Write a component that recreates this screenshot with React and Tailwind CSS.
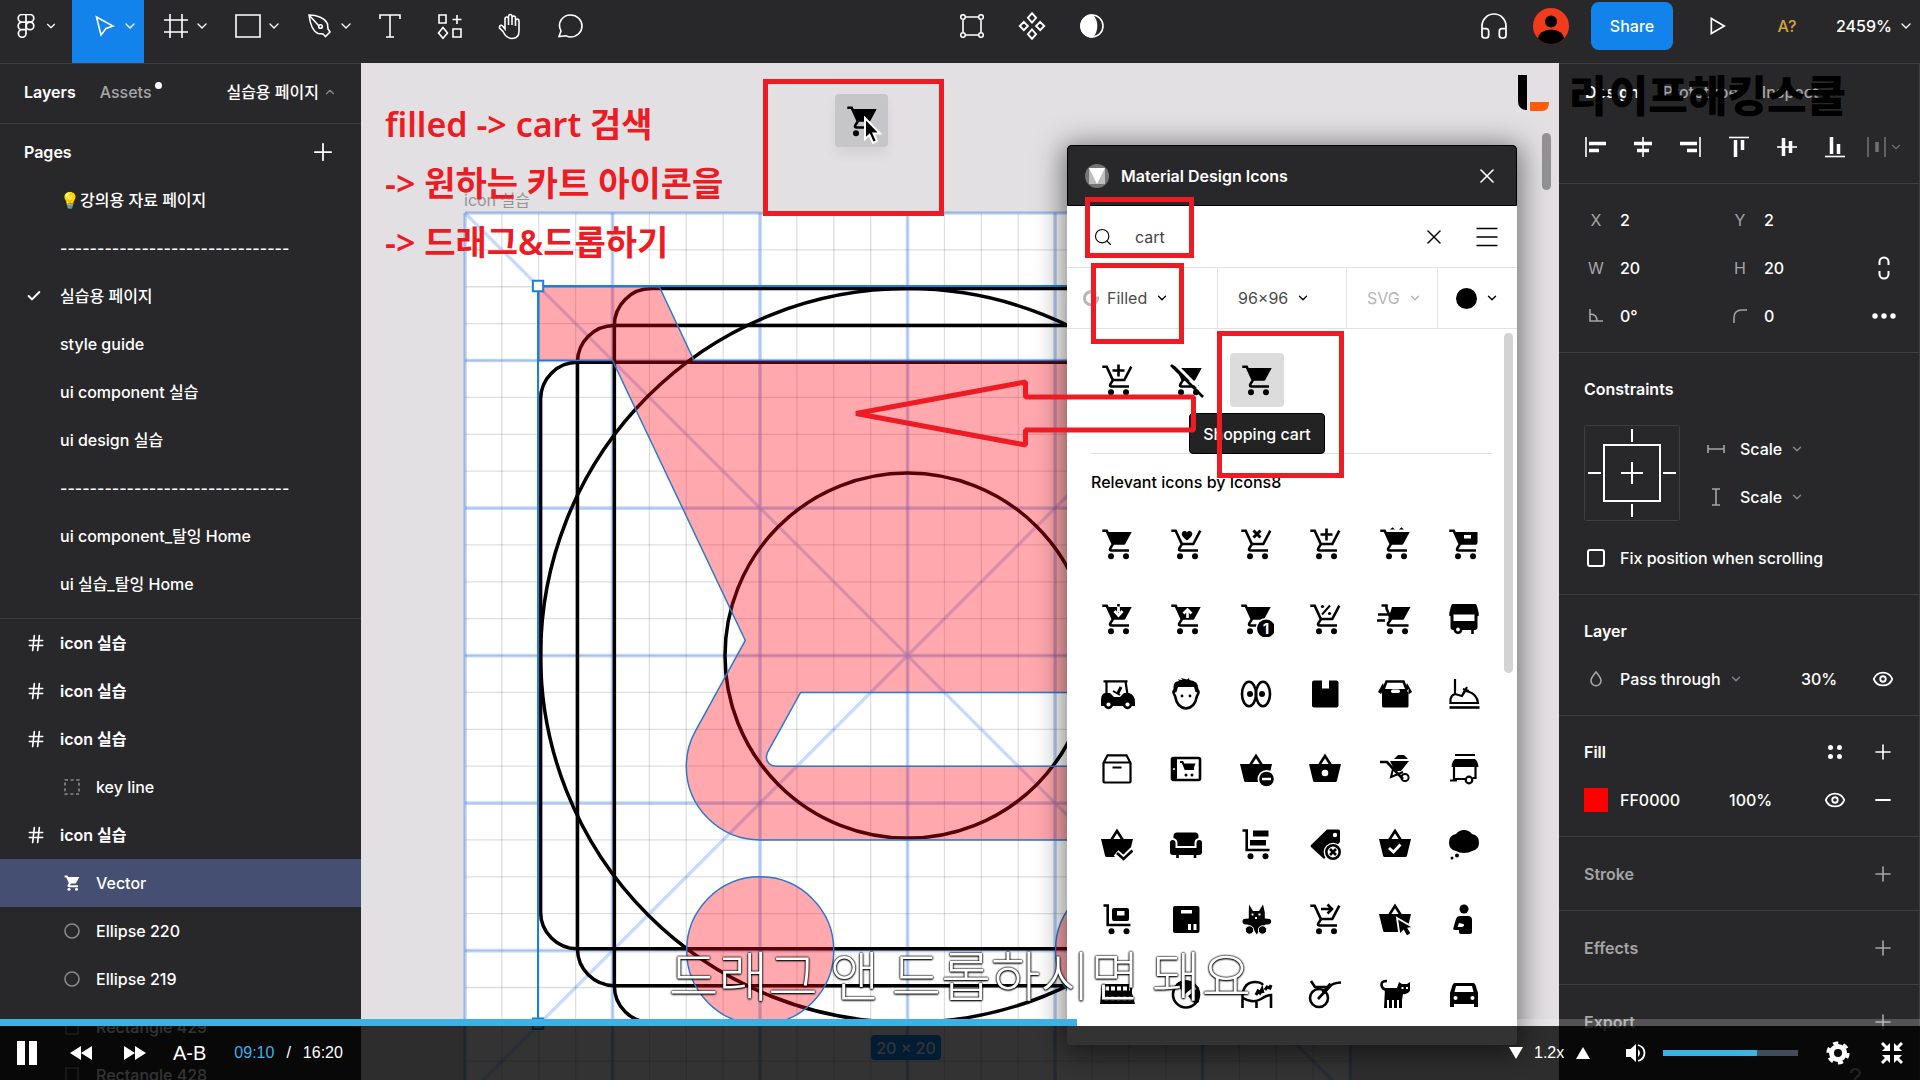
import React from 'react';
import { ChevronDown, ChevronUp, Plus, Minus, X, Check, Search, Hash, Eye, Headphones } from 'lucide-react';

const pages = [
  { name: '💡강의용 자료 페이지' },
  { name: '-------------------------------' },
  { name: '실습용 페이지', current: true },
  { name: 'style guide' },
  { name: 'ui component 실습' },
  { name: 'ui design 실습' },
  { name: '-------------------------------' },
  { name: 'ui component_탈잉 Home' },
  { name: 'ui 실습_탈잉 Home' },
];

const layers = [
  { name: 'icon 실습', type: 'frame' },
  { name: 'icon 실습', type: 'frame' },
  { name: 'icon 실습', type: 'frame' },
  { name: 'key line', type: 'group' },
  { name: 'icon 실습', type: 'frame' },
  { name: 'Vector', type: 'vector', selected: true },
  { name: 'Ellipse 220', type: 'ellipse' },
  { name: 'Ellipse 219', type: 'ellipse' },
  { name: 'Rectangle 429', type: 'rect' },
  { name: 'Rectangle 428', type: 'rect' },
];

/* ---------- shared bits ---------- */

function Svg({ size = 24, box = 24, sw = 1.6, className = '', children }) {
  return (
    <svg
      width={size}
      height={size}
      viewBox={`0 0 ${box} ${box}`}
      fill="none"
      stroke="currentColor"
      strokeWidth={sw}
      className={`shrink-0 ${className}`}
      aria-hidden="true"
    >
      {children}
    </svg>
  );
}

function Select({ label, value, chevron = 'text-[#8a8a8a]', className = '' }) {
  return (
    <label className={`flex items-center gap-2 ${className}`}>
      <select aria-label={label} defaultValue={value} className="appearance-none field-sizing-content bg-transparent outline-none">
        <option>{value}</option>
      </select>
      <ChevronDown className={`w-3.5 h-3.5 shrink-0 ${chevron}`} strokeWidth={2.4} />
    </label>
  );
}

/* ---------- plugin icons, drawn on a 36px box ---------- */

const fillOnly = { fill: 'currentColor', stroke: 'none' };
const white = { fill: '#fff', stroke: 'none' };

const Wheels = () => (
  <g {...fillOnly}>
    <circle cx="12" cy="30.3" r="3" />
    <circle cx="27" cy="30.3" r="3" />
  </g>
);
const CartFrame = () => (
  <>
    <path d="M3.3 4.8h4.4l6.2 13.4-2.6 4.2c-.7 1.3 0 2.1 1.3 2.1h17.4" />
    <Wheels />
  </>
);
const Basket = () => <path {...fillOnly} d="M7.5 6h25.2l-6.3 11.7c-.4.8-1 1.1-1.8 1.1H13.4z" />;
const OpenBasket = () => <path d="M13.6 18h11.7l7-13.4" />;
const HandBasket = () => (
  <>
    <path d="M12.500 13.500 18 5l5.500 8.500" />
    <path {...fillOnly} d="M2 13h32l-4 16.5q-.3 1.5-1.6 1.5H7.6q-1.300 0-1.600-1.500z" />
  </>
);
const Trolley = () => (
  <>
    <path d="M4.500 4.500h4.200v19.500h22.800" />
    <g {...fillOnly}>
      <circle cx="12.5" cy="30.3" r="3" />
      <circle cx="27.5" cy="30.3" r="3" />
    </g>
  </>
);

const addCart = (
  <>
    <CartFrame />
    <OpenBasket />
    <path d="M19.5 2.500v12M13.500 8.500h12" />
  </>
);
const plainCart = (
  <>
    <CartFrame />
    <Basket />
  </>
);
const cartOff = (
  <>
    <CartFrame />
    <Basket />
    <path d="M4 0 38 34" stroke="#fff" strokeWidth="3" />
    <path d="M2 3l32 32" />
  </>
);

const pluginIcons = [
  plainCart,
  <>
    <CartFrame />
    <OpenBasket />
    <path {...fillOnly} d="M19 14.5c-2.500-2.300-5.300-4.200-5.300-6.600 0-2.900 3.800-3.900 5.300-1.400 1.500-2.500 5.300-1.500 5.300 1.400 0 2.400-2.800 4.300-5.300 6.600z" />
  </>,
  <>
    <CartFrame />
    <OpenBasket />
    <path d="m15.500 4.500 7 7m0-7-7 7" strokeWidth="3" />
  </>,
  addCart,
  <>
    <CartFrame />
    <Basket />
    <path {...fillOnly} d="m13 3.500 2.500-2.200L18 3.500zM22 3.500l2.500-2.200L27 3.500z" />
  </>,
  <>
    <CartFrame />
    <path {...fillOnly} d="M7.500 6h24v10.500q0 2.300-2 2.300H13.400z" />
    <path {...white} d="M18 9h7v3.500h-7z" />
  </>,
  <>
    <CartFrame />
    <Basket />
    <path d="M19.500 3.500v8M15.500 10l4 4.500 4-4.500" stroke="#fff" strokeWidth="2.8" />
    <path d="M19.500 3v2.500" />
  </>,
  <>
    <CartFrame />
    <Basket />
    <path d="M19.500 17V9.500M15.500 12.500l4-4 4 4" stroke="#fff" />
  </>,
  <>
    <CartFrame />
    <Basket />
    <circle cx="28" cy="27.5" r="10.5" {...white} />
    <circle cx="28" cy="27.5" r="9" {...fillOnly} />
    <text x="28" y="33" textAnchor="middle" fill="#fff" stroke="none" fontSize="15" fontWeight="700">1</text>
  </>,
  <>
    <CartFrame />
    <OpenBasket />
    <path d="m15 13.500 8-9" strokeWidth="2" />
    <circle cx="15.5" cy="5.5" r="1.6" {...fillOnly} />
    <circle cx="22.5" cy="12.5" r="1.6" {...fillOnly} />
  </>,
  <>
    <path d="M4.500 4.500h5v3l4.500 10.500-3 4.500c-.6 1.200.2 2 1.500 2h19M1 13.500h10M0 19.500h8" />
    <path {...fillOnly} d="M15 6h18.500l-7 12.800H11z" />
    <g {...fillOnly}>
      <circle cx="13" cy="30.3" r="3" />
      <circle cx="28" cy="30.3" r="3" />
    </g>
  </>,
  <>
    <path {...fillOnly} d="M7 3h22q1.500 0 2 2l1.700 7v3H3.300v-3L5 5q.5-2 2-2zM4.500 15h27v11q0 3-3 3h-21q-3 0-3-3z" />
    <path {...white} d="M7.500 13.500h21V20h-21z" />
    <circle cx="12" cy="28.5" r="3.2" fill="#fff" />
    <path d="M26.500 28v5" />
  </>,
  <>
    <path d="M4.500 5.300h24M7.500 5v14M26.500 5l2 14" strokeWidth="2.2" />
    <path d="m18.500 18 3.500-7" strokeWidth="3" />
    <path d="m14 15 7 4" strokeWidth="2" />
    <path {...fillOnly} d="M6 17h5l4 4h6l4-4h5q6 2 6 9v4H2v-6q0-6 4-7z" />
    <circle cx="9.5" cy="28.5" r="3.4" fill="#fff" />
    <circle cx="28.5" cy="28.5" r="3.4" fill="#fff" />
  </>,
  <>
    <path d="M7 14q-2.500 1-1 4l1.200 2.500Q9 31.500 18 32.500 27 31.500 28.800 20.500L30 18q1.500-3-1-4" />
    <path {...fillOnly} d="M5.500 17V11q0-6 6-6l-2-1.500 5 .5L13 2l6 1.500L21 2l.5 2Q30.500 5 30.500 13v4l-3-1-1.500-5H10l-1.500 5z" />
    <circle cx="14" cy="20" r="1.4" {...fillOnly} />
    <circle cx="22" cy="20" r="1.4" {...fillOnly} />
  </>,
  <>
    <ellipse cx="11" cy="18" rx="7" ry="12.3" />
    <ellipse cx="25" cy="18" rx="7" ry="12.3" />
    <circle cx="12" cy="18" r="3" {...fillOnly} />
    <circle cx="24" cy="18" r="3" {...fillOnly} />
  </>,
  <>
    <rect x="5" y="4.5" width="26.5" height="27" rx="2" {...fillOnly} />
    <path {...white} d="M15 4h7v8.500h-7z" />
  </>,
  <>
    <path d="M6 14.500 9.500 5.500h17L30 14.500" />
    <path {...fillOnly} d="M5 13h26.500v17q0 1.500-1.500 1.500H6.500Q5 31.500 5 30zM1 16 6 7l1.500 5-3.500 6zM35 16 30 7l-1.500 5 3.500 6z" />
    <rect x="14" y="13.5" width="9" height="3.5" rx="1.7" {...white} />
  </>,
  <>
    <path d="M9 3v15l7 2 3-5 3 .5Q31 18 32 27H4.500V23q1-4 4.500-5" strokeWidth="2.2" />
    <path d="m17 13 6 2M21 11l-4 7" strokeWidth="2.2" />
    <path d="M3.500 31.500h30" />
  </>,
  <path d="M4.500 12 8.500 4.300h19L31.500 12v18.500q0 1-1 1h-25q-1 0-1-1zM4.500 11.500h27M13.500 16.500h9" strokeWidth="2.2" />,
  <>
    <rect x="4" y="7" width="28" height="22" rx="1.5" />
    <path d="M4 8h5v20H4z" {...fillOnly} />
    <path d="M12 11h2.500l3 7h8.500" strokeWidth="2" />
    <path d="M15 12.500h12.500L25 19h-8z" {...fillOnly} />
    <circle cx="18" cy="24" r="1.5" {...fillOnly} />
    <circle cx="24" cy="24" r="1.5" {...fillOnly} />
    <circle cx="6" cy="18" r="1" {...white} />
  </>,
  <>
    <HandBasket />
    <circle cx="28.5" cy="28" r="9" {...white} />
    <circle cx="28.5" cy="28" r="7.3" {...fillOnly} />
    <path d="M24 28h9" stroke="#fff" strokeWidth="2.5" />
  </>,
  <>
    <HandBasket />
    <circle cx="18" cy="22" r="3.3" {...white} />
  </>,
  <>
    <path d="M3 11h7l11 12 5 5" />
    <path {...fillOnly} d="m17 8 4-4h6l4 4zM13 10h19l-8 10h-6z" />
    <path d="m16 18-2 8 12-5" strokeWidth="2" />
    <circle cx="28" cy="26.5" r="3.6" strokeWidth="2" />
  </>,
  <>
    <path d="M9 4h20M8 15v13h12M4 29.500h7M29.500 15v12h-3" strokeWidth="2.2" />
    <path {...fillOnly} d="M9 8h20q3 2 3.500 8H5.500Q6 10 9 8z" />
    <circle cx="23" cy="29" r="3.3" strokeWidth="2.2" />
  </>,
  <>
    <HandBasket />
    <path d="m17 27 7.500 6.500L34 24" stroke="#fff" strokeWidth="7" />
    <path d="m18 27 6.500 6 9-8.500" />
  </>,
  <>
    <path {...fillOnly} d="M9 6.500h18q3.500 0 3.500 3.500v2q-4 1-4 5v3h-17v-3q0-4-4-5v-2q0-3.500 3.500-3.500zM2 17q0-3 2.700-3T7.500 17v5h21v-5q0-3 2.800-3T34 17v9q0 3-3 3H5q-3 0-3-3z" />
    <path d="M9.500 28v4M27 28v4" />
  </>,
  <>
    <Trolley />
    <path {...fillOnly} d="M15 4.500h15.500v6H15zM12 14h16v5.500H12z" />
  </>,
  <>
    <path {...fillOnly} d="M20 3.500h11.500q1.500 0 1.500 1.500v11L17 33 4 21q-1-1 0-2z" />
    <circle cx="28" cy="9" r="2.2" {...white} />
    <circle cx="26" cy="26" r="9.3" {...white} />
    <circle cx="26" cy="26" r="6.7" />
    <path d="m23 23 6 6m0-6-6 6" />
  </>,
  <>
    <HandBasket />
    <path d="m12 22 4.500 4 7-7.500" stroke="#fff" strokeWidth="2.8" />
  </>,
  <>
    <path {...fillOnly} d="M10 25q-7-1-7-8.500T10 8q3-4 8-4t8 4q7 1 7 8.500T26 25q-3 2-8 2t-8-2z" />
    <circle cx="11" cy="29.5" r="2" {...fillOnly} />
    <circle cx="6" cy="32" r="1.5" {...fillOnly} />
  </>,
  <>
    <Trolley />
    <rect x="13" y="7" width="17" height="13" rx="2" {...fillOnly} />
    <path {...white} d="M18 10h7.500v4.500H18z" />
  </>,
  <>
    <rect x="5" y="5" width="26.5" height="27" rx="2" {...fillOnly} />
    <path {...white} d="M13 9h11v3.500H13zM20 23h3v6h-3zM25.500 23h3v6h-3z" />
  </>,
  <>
    <path {...fillOnly} d="m11 3.500 4 6.500h6l4-6.500 1.800 8v6l5 .5q2 1 1 4-1 2-5 1.500l-4 2-5 8-5-8-4-2q-4 .5-5-1.500-1-3 1-4l5-.5v-6z" />
    <circle cx="11.5" cy="29" r="4.2" fill="currentColor" stroke="#fff" strokeWidth="1" />
    <circle cx="24.5" cy="29" r="4.2" fill="currentColor" stroke="#fff" strokeWidth="1" />
    <path {...white} d="M13.500 12.500h2v2h-2zM20.500 12.500h2v2h-2zM17 16h2v2h-2z" />
  </>,
  <>
    <CartFrame />
    <OpenBasket />
    <path d="M14 8h10M20.500 3.500 25 8l-4.500 4.500" />
  </>,
  <>
    <HandBasket />
    <path d="M20 17l2.500 17 4-4 3 5.500 5-3-3-5 5-1z" fill="currentColor" stroke="#fff" strokeWidth="1.8" />
  </>,
  <>
    <circle cx="18" cy="8" r="4.5" {...fillOnly} />
    <path {...fillOnly} d="M14 15h8q4 0 4 4v12q0 2-2 2H15q-2 0-2-2v-2H9q-2.500 0-1.500-2.500L10 18q1-3 4-3z" />
    <path {...white} d="m13 22-1.500 4H16q3-1 1.500-3z" />
  </>,
  <>
    <path {...fillOnly} d="M3 8h30v9l3 11H1z" />
    <path d="M6 12.500h25M5.500 22.500h27" stroke="#fff" strokeWidth="4" strokeDasharray="4 2" />
  </>,
  <>
    <circle cx="18" cy="18.5" r="13" />
    <path {...fillOnly} d="M17 18 8 8Q18 0 28 9zM20 20l11-9v15l-4 2z" />
  </>,
  <>
    <path d="M4.500 32V19Q6 6 17 6q6 0 8 3M5 22q10 6 18 1 6-4 10-4v13M18.500 26v6" />
    <path d="m18 19 2-4 2 2 2-4 1 4M27 14l2-3 3 1 1-3" strokeWidth="3" />
  </>,
  <>
    <circle cx="12" cy="22" r="9" />
    <path d="m11 23 12-13q3-3 11-3.500M4 5l4 6h12" />
    <path d="m24 8-8 9" strokeWidth="4" />
  </>,
  <>
    <path d="M10 5Q4 5 4.500 9q.5 4 5 5" />
    <path {...fillOnly} d="M8 12h12l2-6 3 2h5l3-2v9q-3 4-7 3l-1 6v8h-3v-8h-2v8h-3v-8h-2v8h-3v-8h-2v8H7z" />
    <path {...white} d="M24.500 11h2v2h-2zM29 11h2v2h-2z" />
  </>,
  <>
    <path {...fillOnly} d="M9 7h18q2 0 2.500 2L32 17v14h-4v-3H8v3H4V17L6.500 9Q7 7 9 7z" />
    <path {...white} d="M10 10h16l1.500 6h-19z" />
    <circle cx="9.5" cy="22" r="2" {...white} />
    <circle cx="26.5" cy="22" r="2" {...white} />
  </>,
];

/* ---------- top toolbar ---------- */

const tools = [
  {
    label: 'Move',
    active: true,
    menu: true,
    icon: <path d="m4.500 3 16.500 9-7 2.500-5 6.500z" />,
  },
  { label: 'Frame', menu: true, icon: <path d="M6 0v24M18 0v24M0 6h24M0 18h24" /> },
  { label: 'Rectangle', menu: true, icon: <path d="M0 1h24v22H0z" /> },
  {
    label: 'Pen',
    menu: true,
    icon: (
      <>
        <path d="M1 1c8 0 16 3 18.500 9l.5 5 2 3-4.500 4.500L15 20l-5-.5C4 17 2 9 1 1zM1 1l10 11" />
        <circle cx="12.5" cy="12.5" r="1.8" />
      </>
    ),
  },
  { label: 'Text', icon: <path d="M2 5V1h20v4M12 1v22M8 23h8" /> },
  {
    label: 'Resources',
    icon: <path d="M1 1h7v8H1zM15 15h8v8h-8zM19 1v9M14.500 5.500h9M5 13.500 9.500 19 5 24.200.5 19z" />,
  },
  {
    label: 'Hand',
    icon: (
      <path d="M7 15V5c0-2.600 3.500-2.600 3.500 0v6V2.500c0-2.600 3.500-2.600 3.500 0V11 4c0-2.600 3.500-2.600 3.500 0v8-5c0-2.600 3.500-2.400 3.500 0v10c0 5-3 7.500-7 7.500-5 0-7-3-9-7L1.500 14C1 11 4 10.500 5 12.500z" />
    ),
  },
  { label: 'Comment', icon: <path d="M1 22.500 3 17C-1.500 8.500 5 1 12.500 1 19 1 24 6 24 12s-5 11-11.500 11c-2 0-3-.5-4.500-1.200z" /> },
];

function Toolbar() {
  return (
    <header className="h-[63px] shrink-0 flex justify-between bg-[#28282a] text-white">
      <nav className="flex">
        <button aria-label="Main menu" className="w-[72px] h-full pl-[14px] pb-[11px] flex items-center gap-1.5">
          <Svg sw="1.7">
            <path d="M12 .5H8a3.800 3.800 0 0 0 0 7.600h4zM12 .5h4a3.800 3.800 0 0 1 0 7.600h-4zM12 8.100H8a3.800 3.800 0 0 0 0 7.600h4zM12 15.700H8a3.800 3.800 0 1 0 4 3.800z" />
            <circle cx="16" cy="11.9" r="3.8" />
          </Svg>
          <ChevronDown className="w-3.5 h-3.5" />
        </button>
        {tools.map((tool) => (
          <button
            key={tool.label}
            aria-label={tool.label}
            className={`h-full pb-[11px] flex items-center gap-1.5 ${tool.menu ? 'w-[72px] pl-5' : 'w-[60px] justify-center'} ${tool.active ? 'bg-[#1283eb]' : ''}`}
          >
            <Svg className="overflow-visible">{tool.icon}</Svg>
            {tool.menu && <ChevronDown className="w-4 h-4" />}
          </button>
        ))}
      </nav>

      <nav className="flex pb-[11px]">
        <button aria-label="Edit object" className="w-[60px] flex items-center justify-center">
          <Svg>
            <path d="M6 3h12M6 21h12M3 6v12M21 6v12" />
            <circle cx="3" cy="3" r="2.3" />
            <circle cx="21" cy="3" r="2.3" />
            <circle cx="3" cy="21" r="2.3" />
            <circle cx="21" cy="21" r="2.3" />
          </Svg>
        </button>
        <button aria-label="Create component" className="w-[60px] flex items-center justify-center">
          <Svg size={28}>
            <path d="m12 1 3.500 4L12 9 8.500 5zM12 15l3.500 4-3.500 4-3.500-4zM5 8.500 8.500 12 5 15.500 1.500 12zM19 8.500l3.500 3.500-3.500 3.500-3.500-3.500z" />
          </Svg>
        </button>
        <button aria-label="Use as mask" className="w-[60px] flex items-center justify-center">
          <Svg>
            <circle cx="12" cy="12" r="11" />
            <path d="M12 1a11 11 0 0 0 0 22q4.500-4 4.500-11T12 1z" fill="currentColor" />
          </Svg>
        </button>
      </nav>

      <div className="flex items-center pb-[11px]">
        <button aria-label="Start conversation" className="w-[60px] flex justify-center">
          <Headphones className="w-8 h-8" strokeWidth={1.3} />
        </button>
        <button aria-label="Account" className="w-[54px] flex justify-center">
          <svg width="36" height="36" viewBox="0 0 36 36">
            <clipPath id="avatar"><circle cx="18" cy="18" r="18" /></clipPath>
            <g clipPath="url(#avatar)">
              <path d="M0 0h36v36H0z" fill="#f23a1d" />
              <circle cx="18" cy="13.5" r="6" />
              <ellipse cx="18" cy="31" rx="13" ry="9.5" />
            </g>
          </svg>
        </button>
        <button className="ml-[13px] h-12 w-[82px] rounded-lg bg-[#1283eb] font-medium">Share</button>
        <button aria-label="Present" className="w-[90px] flex justify-center">
          <Svg size={20}><path d="M4 3v18l15.500-9z" strokeWidth="2" /></Svg>
        </button>
        <span className="w-12 text-center font-medium text-[#d3a43b]">A?</span>
        <button className="w-[109px] pl-[25px] flex items-center gap-1.5 font-medium">
          2459% <ChevronDown className="w-4 h-4" />
        </button>
      </div>
    </header>
  );
}

/* ---------- left panel ---------- */

function LayerIcon({ type }) {
  if (type === 'frame') return <Hash className="w-5 h-5" strokeWidth={2} />;
  if (type === 'group') return <Svg size={16} box={16} className="text-[#8a8a8a]"><path d="M1 1h14v14H1z" strokeDasharray="3 2.6" /></Svg>;
  if (type === 'vector') return <Svg size={18} box={36} sw={4}>{plainCart}</Svg>;
  if (type === 'ellipse') return <Svg size={16} box={16} className="text-[#8a8a8a]"><circle cx="8" cy="8" r="7" /></Svg>;
  return <Svg size={16} box={16} className="text-[#8a8a8a]"><path d="M2 1h12v14H2z" /></Svg>;
}

function LeftPanel() {
  return (
    <aside className="w-[361px] shrink-0 bg-[#28282a] text-white font-medium overflow-hidden border-t border-[#3e3e40]">
      <div className="h-[60px] px-6 pb-1 flex items-center border-b border-[#3e3e40]">
        <button className="font-semibold">Layers</button>
        <button className="ml-6 relative text-[#a5a5a6]">
          Assets
          <span className="absolute -right-2.5 top-0.5 w-[7px] h-[7px] rounded-full bg-white" />
        </button>
        <button className="ml-auto flex items-center gap-1">
          실습용 페이지 <ChevronUp className="w-3.5 h-3.5 text-[#8a8a8a]" />
        </button>
      </div>
      <div className="h-[52px] pt-1 px-6 flex items-center justify-between">
        <h2 className="font-semibold">Pages</h2>
        <button aria-label="Add page" className="flex"><Plus className="w-7 h-7" strokeWidth={1.5} /></button>
      </div>
      <ul className="pb-2.5 border-b border-[#3e3e40]">
        {pages.map((page, i) => (
          <li key={i} className="h-12 flex items-center">
            <span className="w-[60px] pl-2 flex justify-center">
              {page.current && <Check className="w-4 h-4" strokeWidth={3} />}
            </span>
            <a href="#page" className="whitespace-nowrap">{page.name}</a>
          </li>
        ))}
      </ul>
      <ul>
        {layers.map((layer, i) => (
          <li
            key={i}
            className={`h-12 flex items-center ${layer.type === 'frame' ? 'pl-3 font-semibold' : 'pl-12'} ${layer.selected ? 'bg-[#454f71]' : ''}`}
          >
            <span className="w-12 flex justify-center"><LayerIcon type={layer.type} /></span>
            {layer.name}
          </li>
        ))}
      </ul>
    </aside>
  );
}

/* ---------- canvas artwork ---------- */

const UNIT = 36.88;
const lines = Array.from({ length: 25 }, (_, i) => i);

function Artboard() {
  return (
    <svg className="absolute left-0 top-0" width="1198" height="1017" viewBox="361 63 1198 1017" aria-hidden="true">
      <g transform={`translate(465 213) scale(${UNIT})`} fill="none">
        <path d="M0 0h24v24H0z" fill="#fff" />
        {lines.map((n) => (
          <path key={n} d={`M${n} 0v24M0 ${n}h24`} stroke="#000" strokeOpacity=".13" strokeWidth=".035" />
        ))}
        {lines.filter((n) => n % 4 === 0).map((n) => (
          <path key={n} d={`M${n} 0v24M0 ${n}h24`} stroke="#4285f4" strokeOpacity=".32" strokeWidth=".1" />
        ))}
        <path d="M0 0l24 24M0 24 24 0" stroke="#4a8cf5" strokeOpacity=".32" strokeWidth=".09" />
        <g stroke="#000" strokeWidth=".095">
          <circle cx="12" cy="12" r="9.95" />
          <circle cx="12" cy="12" r="4.95" />
          <rect x="2.05" y="4.05" width="19.9" height="15.9" rx="1" />
          <rect x="3.05" y="3.05" width="17.9" height="17.9" rx="1" />
          <rect x="4.05" y="2.05" width="15.9" height="19.9" rx="1" />
        </g>
        <path
          transform="translate(1 0)"
          d="M7 18c-1.100 0-1.990.9-1.990 2S5.900 22 7 22s2-.9 2-2-.9-2-2-2zM1 2v2h2l3.600 7.590-1.350 2.450c-.16.28-.25.61-.25.96 0 1.100.9 2 2 2h12v-2H7.420c-.14 0-.25-.11-.25-.25l.03-.12.9-1.630h7.450c.75 0 1.410-.41 1.750-1.030l3.580-6.490c.08-.14.12-.31.12-.48 0-.55-.45-1-1-1H5.210l-.94-2H1zm16 16c-1.100 0-1.990.9-1.990 2s.89 2 1.990 2 2-.9 2-2-.9-2-2-2z"
          fill="#ff0010"
          fillOpacity=".34"
          stroke="#2a78cf"
          strokeWidth=".04"
        />
        <path d="M1.980 22V1.980H22V22z" stroke="#1a80d9" strokeWidth=".055" />
        <path d="M1.840 1.840h.28v.28h-.28zM1.840 21.840h.28v.28h-.28z" fill="#fff" stroke="#1a80d9" strokeWidth=".055" />
      </g>
    </svg>
  );
}

/* ---------- plugin window ---------- */

function PluginWindow() {
  return (
    <section className="absolute left-[706px] top-[82px] w-[450px] h-[900px] flex flex-col rounded-sm bg-white text-[#333] shadow-[0_4px_28px_4px_rgba(0,0,0,0.5)]">
      <div className="h-[61px] shrink-0 px-[17px] flex items-center bg-[#28282a] text-white border border-black rounded-t-sm">
        <svg width="24" height="24" viewBox="0 0 24 24" aria-hidden="true">
          <circle cx="12" cy="12" r="12" fill="#757575" />
          <path d="M4 4h16v16H4z" fill="#bdbdbd" />
          <path d="M4 4h16l-8 16z" fill="#fff" />
        </svg>
        <h2 className="ml-3 font-semibold">Material Design Icons</h2>
        <button aria-label="Close plugin" className="ml-auto"><X className="w-6 h-6" strokeWidth={1.6} /></button>
      </div>
      <div className="h-[61px] shrink-0 pl-[26px] pr-[18px] flex items-center text-black">
        <Search className="w-5 h-5 shrink-0" strokeWidth={1.4} />
        <input aria-label="Search icons" defaultValue="cart" className="ml-[22px] w-0 flex-1 outline-none text-[#444]" />
        <button aria-label="Clear search"><X className="w-6 h-6" strokeWidth={1.4} /></button>
        <button aria-label="Menu" className="ml-[29px]">
          <Svg sw="1.3"><path d="M1.500 3.500h21M1.500 12h21M1.500 20.500h21" /></Svg>
        </button>
      </div>
      <div className="h-[62px] shrink-0 flex border-y border-[#e2e2e2] divide-x divide-[#e2e2e2] text-[#4a4a4a]">
        <div className="w-[151px] pl-4 flex items-center gap-2">
          <Svg size={16} box={16} sw={3} className="text-[#b8b8b8]"><path d="M13 4a6.500 6.500 0 1 0 1.500 4H10" /></Svg>
          <Select label="Style" value="Filled" chevron="text-black" />
        </div>
        <Select label="Size" value="96×96" chevron="text-black" className="w-[129px] pl-5" />
        <Select label="Format" value="SVG" chevron="text-[#b5b5b5]" className="w-[91px] pl-5 text-[#b5b5b5]" />
        <button aria-label="Color" className="flex-1 flex items-center justify-center gap-2">
          <span className="w-[21px] h-[21px] rounded-full bg-black" />
          <ChevronDown className="w-3.5 h-3.5 text-black" strokeWidth={2.4} />
        </button>
      </div>
      <div className="relative flex-1 px-[15px] overflow-hidden text-black">
        <div className="h-[124px] pt-6 flex">
          {[addCart, cartOff, plainCart].map((icon, i) => (
            <div key={i} className="w-[70px] flex justify-center items-start">
              <button className={`w-[54px] h-[54px] flex items-center justify-center rounded-sm ${i === 2 ? 'bg-[#dcdcdc]' : ''}`}>
                <Svg size={36} box={36} sw={2.6}>{icon}</Svg>
              </button>
            </div>
          ))}
        </div>
        <h3 className="ml-[9px] mr-2.5 pt-4 border-t border-[#dedede] font-medium h-[53px]">Relevant icons by Icons8</h3>
        <div className="pr-[3px] grid grid-cols-6 auto-rows-[75px]">
          {pluginIcons.map((icon, i) => (
            <button key={i} className="flex items-center justify-center">
              <Svg size={36} box={36} sw={2.6}>{icon}</Svg>
            </button>
          ))}
        </div>
        <span className="absolute right-1 top-1 w-[9px] h-[340px] rounded-full bg-[#d3d3d3]" />
        <div role="tooltip" className="absolute left-[122px] top-[84px] w-[136px] h-[41px] flex items-center justify-center rounded-sm bg-[#232323] border border-black text-white font-medium">
          Shopping cart
        </div>
      </div>
    </section>
  );
}

/* ---------- lecture notes drawn over the canvas ---------- */

function Annotations() {
  return (
    <>
      <div className="absolute left-6 top-8 font-['Noto_Sans','Noto_Sans_CJK_KR',sans-serif] text-[34px] leading-[59px] font-semibold whitespace-pre text-[#ed1c24]">
        <p>filled -&gt; cart 검색</p>
        <p>-&gt; 원하는 카트 아이콘을</p>
        <p>-&gt; 드래그&amp;드롭하기</p>
      </div>
      <span className="absolute left-[402px] top-4 w-[181px] h-[137px] border-5 border-[#ed1c24]" />
      <span className="absolute left-[724px] top-[134px] w-[109px] h-[61px] border-5 border-[#ed1c24]" />
      <span className="absolute left-[730px] top-[200px] w-[93px] h-[81px] border-5 border-[#ed1c24]" />
      <span className="absolute left-[856px] top-[268px] w-[127px] h-[147px] border-5 border-[#ed1c24]" />
      <svg className="absolute left-[489px] top-[312px]" width="350" height="76" viewBox="850 375 350 76" aria-hidden="true">
        <path d="M856 413.500 1025.500 382v15H1193.500v33H1025.500v15z" fill="none" stroke="#ed1c24" strokeWidth="5" strokeLinejoin="bevel" />
      </svg>
    </>
  );
}

function Canvas() {
  return (
    <main className="relative flex-1 min-w-0 overflow-hidden bg-[#e2e0e3]">
      <Artboard />
      <span className="absolute left-[103px] top-[125px] text-[#959497]">icon 실습</span>
      <span className="absolute left-[510px] top-[972px] w-[70px] h-[25px] flex items-center justify-center rounded-sm bg-[#0d8bff] text-white font-medium">20 × 20</span>
      <span className="absolute right-2 top-[70px] w-[9px] h-[57px] rounded-full bg-[#939395]" />
      <div className="absolute left-[474px] top-[31px] w-[53px] h-[53px] flex items-center justify-center rounded-sm bg-[#c6c6c8] shadow-[0_8px_12px_rgba(0,0,0,0.06)]">
        <Svg size={36} box={36} sw={2.6} className="text-black">{plainCart}</Svg>
      </div>
      <svg className="absolute left-[502px] top-[53px]" width="20" height="30" viewBox="0 0 20 30" aria-hidden="true">
        <path d="M2 2v21l4.500-4 3.500 8 4-2-3.500-7.500H17z" stroke="#fff" strokeWidth="2" />
      </svg>
      <PluginWindow />
      <Annotations />
    </main>
  );
}

/* ---------- right panel ---------- */

function Field({ label, name, value }) {
  return (
    <label className="flex items-center h-12">
      <span className="w-12 flex justify-center text-[#a5a5a6]">{label}</span>
      <input aria-label={name} defaultValue={value} className="w-24 bg-transparent outline-none font-medium" />
    </label>
  );
}

function IconSlot({ label, children }) {
  return (
    <button aria-label={label} className="w-12 h-12 flex items-center justify-center">{children}</button>
  );
}

const sectionClass = 'border-t border-[#3e3e40] py-3 pl-[13px] pr-3';

function RightPanel() {
  return (
    <aside className="w-[361px] shrink-0 bg-[#28282a] text-white overflow-hidden border-t border-r border-[#3e3e40]">
      <div className="h-[60px] pl-[26px] pb-1 flex items-center gap-6 text-[#a5a5a6]">
        <button className="font-semibold text-white">Design</button>
        <button className="font-medium">Prototype</button>
        <button className="font-medium">Inspect</button>
      </div>
      <div className="h-[59px] pb-[14px] pl-3 flex items-center">
        <IconSlot label="Align left"><Svg><path d="M3 2v20" /><path d="M6 8.500h17M6 15.500h10" strokeWidth="3.5" /></Svg></IconSlot>
        <IconSlot label="Align horizontal centers"><Svg><path d="M12 2v20" /><path d="M3 8.500h18M6 15.500h12" strokeWidth="3.5" /></Svg></IconSlot>
        <IconSlot label="Align right"><Svg><path d="M21 2v20" /><path d="M1 8.500h17M8 15.500h10" strokeWidth="3.5" /></Svg></IconSlot>
        <IconSlot label="Align top"><Svg><path d="M2 2.500h20" /><path d="M8.500 5v17M15.500 5v10" strokeWidth="3.5" /></Svg></IconSlot>
        <IconSlot label="Align vertical centers"><Svg><path d="M2 12h20" /><path d="M8.500 3v18M15.500 6v12" strokeWidth="3.5" /></Svg></IconSlot>
        <IconSlot label="Align bottom"><Svg><path d="M2 21.500h20" /><path d="M8.500 2v17M15.500 9v10" strokeWidth="3.5" /></Svg></IconSlot>
        <button aria-label="Tidy up" className="pl-1.5 flex items-center text-[#707072]">
          <Svg><path d="M3 2v20M20 2v20" /><path d="M12 7v10" strokeWidth="3.5" /></Svg>
          <ChevronDown className="w-3.5 h-3.5" />
        </button>
      </div>

      <section className={`${sectionClass} grid grid-cols-[144px_144px_48px]`}>
        <Field label="X" name="X" value="2" />
        <Field label="Y" name="Y" value="2" />
        <span />
        <Field label="W" name="Width" value="20" />
        <Field label="H" name="Height" value="20" />
        <IconSlot label="Constrain proportions">
          <Svg sw="2"><path d="M7.500 9V6a4.500 4.500 0 0 1 9 0v3M7.500 15v3a4.500 4.500 0 0 0 9 0v-3" /></Svg>
        </IconSlot>
        <Field label={<Svg size={14} box={14}><path d="M1 0v12h13M1 5q7 0 7 7" /></Svg>} name="Rotation" value="0°" />
        <Field label={<Svg size={14} box={14}><path d="M1 14V9q0-8 8-8h5" /></Svg>} name="Corner radius" value="0" />
        <IconSlot label="More">
          <Svg><g {...fillOnly}><circle cx="3" cy="12" r="2.7" /><circle cx="12" cy="12" r="2.7" /><circle cx="21" cy="12" r="2.7" /></g></Svg>
        </IconSlot>
      </section>

      <section className={sectionClass}>
        <h2 className="h-12 pl-3 flex items-center font-semibold">Constraints</h2>
        <div className="mt-3 mb-[13px] pl-3 flex">
          <svg width="96" height="96" viewBox="0 0 96 96" fill="none" stroke="#fff" strokeWidth="2" aria-hidden="true">
            <rect x=".5" y=".5" width="95" height="95" rx="2" stroke="#3e3e40" strokeWidth="1" />
            <path d="M20 20h56v56H20zM48 4v13M48 79v13M4 48h13M79 48h13M37 48h22M48 37v22" />
          </svg>
          <div className="ml-3 font-medium">
            <div className="h-12 flex items-center">
              <span className="w-12 flex justify-center text-[#a5a5a6]"><Svg size={18} box={18}><path d="M1 5v8M17 5v8M1 9h16" /></Svg></span>
              <Select label="Horizontal constraint" value="Scale" />
            </div>
            <div className="h-12 flex items-center">
              <span className="w-12 flex justify-center text-[#a5a5a6]"><Svg size={18} box={18}><path d="M5 1h8M5 17h8M9 1v16" /></Svg></span>
              <Select label="Vertical constraint" value="Scale" />
            </div>
          </div>
        </div>
        <label className="h-12 pl-[15px] flex items-center gap-[15px] font-medium">
          <input type="checkbox" className="appearance-none w-[18px] h-[18px] rounded-[3px] border-2 border-white" />
          Fix position when scrolling
        </label>
      </section>

      <section className={sectionClass}>
        <h2 className="h-12 pl-3 flex items-center font-semibold">Layer</h2>
        <div className="flex items-center font-medium">
          <span className="w-12 flex justify-center text-[#a5a5a6]"><Svg size={16} box={16}><path d="M8 1c3 3.500 5 6 5 8.500a5 5.300 0 0 1-10 0C3 7 5 4.500 8 1z" /></Svg></span>
          <Select label="Blend mode" value="Pass through" />
          <input aria-label="Layer opacity" defaultValue="30%" className="ml-auto w-[58px] bg-transparent outline-none" />
          <IconSlot label="Toggle visibility"><Eye className="w-[22px] h-[22px]" /></IconSlot>
        </div>
      </section>

      <section className={sectionClass}>
        <div className="h-12 flex items-center">
          <h2 className="pl-3 mr-auto font-semibold">Fill</h2>
          <IconSlot label="Styles">
            <Svg size={16} box={16}><g {...fillOnly}><circle cx="3.5" cy="3.5" r="2.5" /><circle cx="12.5" cy="3.5" r="2.5" /><circle cx="3.5" cy="12.5" r="2.5" /><circle cx="12.5" cy="12.5" r="2.5" /></g></Svg>
          </IconSlot>
          <IconSlot label="Add fill"><Plus className="w-6 h-6" strokeWidth={1.6} /></IconSlot>
        </div>
        <div className="h-12 flex items-center font-medium">
          <button aria-label="Fill color" className="ml-3 mr-3 w-6 h-6 bg-[#ff0000]" />
          <input aria-label="Fill hex" defaultValue="FF0000" className="w-[109px] bg-transparent outline-none" />
          <input aria-label="Fill opacity" defaultValue="100%" className="w-0 flex-1 bg-transparent outline-none" />
          <IconSlot label="Toggle fill"><Eye className="w-[22px] h-[22px]" /></IconSlot>
          <IconSlot label="Remove fill"><Minus className="w-6 h-6" strokeWidth={1.8} /></IconSlot>
        </div>
      </section>

      {['Stroke', 'Effects', 'Export'].map((name) => (
        <section key={name} className={`${sectionClass} h-[74px] flex items-center justify-between text-[#a5a5a6]`}>
          <h2 className="pl-3 font-semibold">{name}</h2>
          <IconSlot label={`Add ${name}`}><Plus className="w-6 h-6" strokeWidth={1.6} /></IconSlot>
        </section>
      ))}

      <div className="pl-[278px]">
        <button aria-label="Help" className="w-[37px] h-[37px] text-[26px] text-[#a5a5a6]">?</button>
      </div>
    </aside>
  );
}

/* ---------- video player ---------- */

function Player() {
  return (
    <footer className="absolute inset-x-0 bottom-0 font-['Liberation_Sans','Noto_Sans_CJK_KR',sans-serif] text-white">
      <div className="h-[7px] bg-white/20"><div className="h-full w-[56.1%] bg-[#3eb1e3]" /></div>
      <div className="h-[54px] px-4 flex items-center bg-black/80">
        <button aria-label="Pause">
          <svg width="22" height="24" viewBox="0 0 22 24" fill="#fff"><path d="M1 0h8v24H1zM13 0h8v24h-8z" /></svg>
        </button>
        <button aria-label="Rewind" className="ml-8">
          <svg width="22" height="14" viewBox="0 0 22 14" fill="#fff"><path d="M11 0v14L0 7zM22 0v14L11 7z" /></svg>
        </button>
        <button aria-label="Fast forward" className="ml-8">
          <svg width="22" height="14" viewBox="0 0 22 14" fill="#fff"><path d="M0 0v14l11-7zM11 0v14l11-7z" /></svg>
        </button>
        <button className="ml-[27px] text-xl">A-B</button>
        <div className="ml-7 flex gap-3">
          <span className="text-[#3eb1e3]">09:10</span>
          <span>/</span>
          <span>16:20</span>
        </div>

        <div className="ml-auto flex items-center">
          <button aria-label="Slower"><svg width="14" height="12" viewBox="0 0 14 12" fill="#fff"><path d="M0 0h14L7 12z" /></svg></button>
          <span className="ml-[11px] w-8">1.2x</span>
          <button aria-label="Faster" className="ml-2.5"><svg width="14" height="12" viewBox="0 0 14 12" fill="#fff"><path d="M0 12h14L7 0z" /></svg></button>
          <button aria-label="Mute" className="ml-9">
            <svg width="20" height="20" viewBox="0 0 20 20" fill="#fff"><path d="M0 6h4.500L10 1v18l-5.500-5H0zM12 6q4 4 0 8z" /><path d="M12 2q6.500 2 6.500 8T12 18" fill="none" stroke="#fff" strokeWidth="1.8" /></svg>
          </button>
          <input
            type="range"
            aria-label="Volume"
            defaultValue={70}
            className="ml-[17px] w-[135px] h-1.5 appearance-none bg-[linear-gradient(to_right,#3eb1e3_70%,#414d5b_70%)] [&::-webkit-slider-thumb]:appearance-none [&::-webkit-slider-thumb]:w-0"
          />
          <button aria-label="Settings" className="ml-7">
            <svg width="24" height="24" viewBox="0 0 24 24" fill="none" stroke="#fff">
              <circle cx="12" cy="12" r="6.5" strokeWidth="5" />
              <circle cx="12" cy="12" r="9.8" strokeWidth="3.6" strokeDasharray="5.13 5.13" />
            </svg>
          </button>
          <button aria-label="Exit full screen" className="ml-[30px]">
            <svg width="24" height="24" viewBox="0 0 24 24" fill="#fff" stroke="#fff" strokeWidth="3">
              <path d="m2 2 5 5M22 2l-5 5M2 22l5-5M22 22l-5-5" />
              <path stroke="none" d="M10 2v8H2zM14 2v8h8zM10 22v-8H2zM14 22v-8h8z" />
            </svg>
          </button>
        </div>
      </div>
    </footer>
  );
}

export default function App() {
  return (
    <div className="relative h-screen flex flex-col overflow-hidden bg-[#28282a] font-['Inter','Noto_Sans_CJK_KR',sans-serif] text-base">
      <Toolbar />
      <div className="flex-1 min-h-0 flex">
        <LeftPanel />
        <Canvas />
        <RightPanel />
      </div>

      {/* school watermark */}
      <div className="absolute right-[74px] top-[63px] flex items-center text-black">
        <svg width="32" height="36" viewBox="0 0 32 36" aria-hidden="true">
          <path d="M0 0h9v35Q0 35 0 26z" />
          <path d="M12 27h19q0 9-7 9H12z" fill="#ff5b0a" />
        </svg>
        <span className="ml-[19px] font-['Noto_Sans_CJK_KR',sans-serif] text-[43px] leading-[60px] font-black">라이프해킹스쿨</span>
      </div>

      <p className="absolute inset-x-0 bottom-[76px] text-center font-['Noto_Sans_CJK_KR',sans-serif] text-[54px] leading-[60px] font-light text-white [text-shadow:0_0_2px_#000,0_0_2px_#000,0_1px_2px_#000]">
        드래그 앤 드롭하시면 돼요
      </p>
      <Player />
    </div>
  );
}
